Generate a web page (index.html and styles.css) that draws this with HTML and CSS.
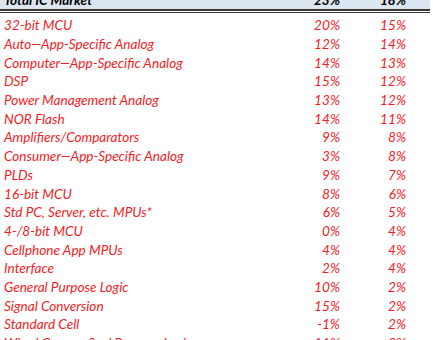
FILE: index.html
```html
<!DOCTYPE html>
<html>
<head>
<meta charset="utf-8">
<link rel="stylesheet" href="styles.css">
</head>
<body>
<div class="sheet">
  <div class="row head">
    <div class="label">Total IC Market</div>
    <div class="num">23%</div>
    <div class="num">18%</div>
  </div>
  <div class="rule"></div>
  <div class="body">
    <div class="row"><div class="label">32-bit MCU</div><div class="num">20%</div><div class="num">15%</div></div>
    <div class="row"><div class="label">Auto—App-Specific Analog</div><div class="num">12%</div><div class="num">14%</div></div>
    <div class="row"><div class="label">Computer—App-Specific Analog</div><div class="num">14%</div><div class="num">13%</div></div>
    <div class="row"><div class="label">DSP</div><div class="num">15%</div><div class="num">12%</div></div>
    <div class="row"><div class="label">Power Management Analog</div><div class="num">13%</div><div class="num">12%</div></div>
    <div class="row"><div class="label">NOR Flash</div><div class="num">14%</div><div class="num">11%</div></div>
    <div class="row"><div class="label">Amplifiers/Comparators</div><div class="num">9%</div><div class="num">8%</div></div>
    <div class="row"><div class="label">Consumer—App-Specific Analog</div><div class="num">3%</div><div class="num">8%</div></div>
    <div class="row"><div class="label">PLDs</div><div class="num">9%</div><div class="num">7%</div></div>
    <div class="row"><div class="label">16-bit MCU</div><div class="num">8%</div><div class="num">6%</div></div>
    <div class="row"><div class="label">Std PC, Server, etc. MPUs*</div><div class="num">6%</div><div class="num">5%</div></div>
    <div class="row"><div class="label">4-/8-bit MCU</div><div class="num">0%</div><div class="num">4%</div></div>
    <div class="row"><div class="label">Cellphone App MPUs</div><div class="num">4%</div><div class="num">4%</div></div>
    <div class="row"><div class="label">Interface</div><div class="num">2%</div><div class="num">4%</div></div>
    <div class="row"><div class="label">General Purpose Logic</div><div class="num">10%</div><div class="num">2%</div></div>
    <div class="row"><div class="label">Signal Conversion</div><div class="num">15%</div><div class="num">2%</div></div>
    <div class="row"><div class="label">Standard Cell</div><div class="num">-1%</div><div class="num">2%</div></div>
    <div class="row"><div class="label">Wired Comm—Spcl Purpose Logic</div><div class="num">11%</div><div class="num">2%</div></div>
  </div>
</div>
</body>
</html>
```
FILE: styles.css
```css
html, body {
  margin: 0;
  padding: 0;
  background: #ffffff;
  overflow: hidden;
}
.sheet {
  width: 430px;
  margin-top: -10px;
  font-family: Lato, "Open Sans", sans-serif;
  font-style: italic;
  font-size: 13.6px;
  color: #f21c24;
}
.row {
  display: grid;
  grid-template-columns: 1fr 66px 66px;
  padding: 0 24px 0 4px;
  height: 18.7px;
  align-items: center;
  white-space: nowrap;
}
.num {
  text-align: right;
}
.head {
  height: 19px;
  background: #dce6f1;
  color: #000000;
  font-weight: bold;
  border-bottom: 2px solid #3a3a3a;
}
.rule {
  height: 1px;
  margin-top: 1px;
  background: #3a3a3a;
}
.body {
  padding-top: 3px;
}
```
